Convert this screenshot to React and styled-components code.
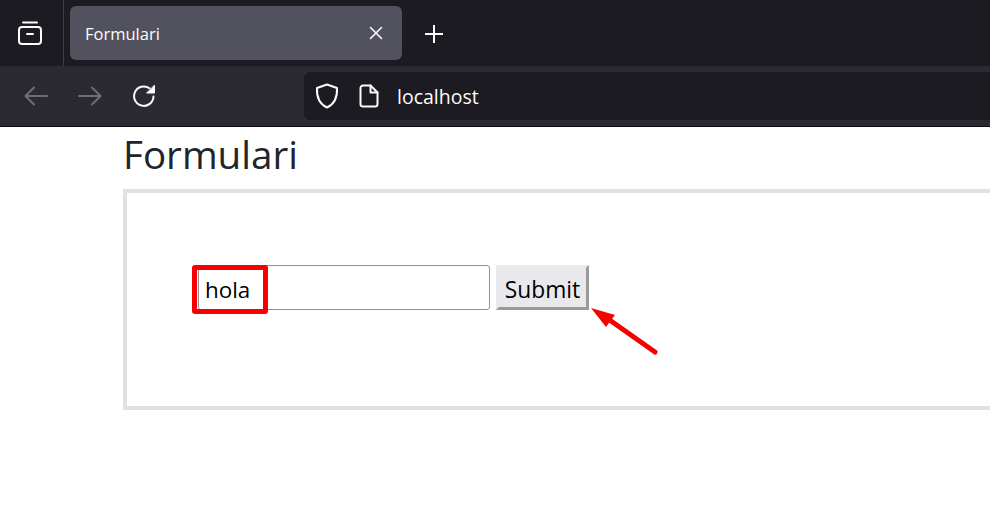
import styled, { createGlobalStyle } from "styled-components";

const GlobalStyle = createGlobalStyle`
  html, body {
    margin: 0;
    padding: 0;
    height: 100%;
    overflow: hidden;
    background: #fff;
  }
  #root {
    height: 100%;
  }
`;

const Window = styled.div`
  display: flex;
  flex-direction: column;
  width: 990px;
  height: 519px;
  overflow: hidden;
  font-family: "Open Sans", "Noto Sans", sans-serif;
`;

const TabBar = styled.div`
  display: flex;
  align-items: stretch;
  height: 66px;
  background: #1c1b22;
`;

const SideButton = styled.div`
  display: flex;
  align-items: center;
  box-sizing: border-box;
  width: 64px;
  padding-left: 17px;
  border-right: 1px solid #3f3e46;
`;

const Tab = styled.div`
  display: flex;
  align-items: center;
  justify-content: space-between;
  box-sizing: border-box;
  width: 332px;
  height: 54px;
  margin: 6px 0 0 6px;
  padding: 0 19px 0 15px;
  border-radius: 6px;
  background: #52525e;
  color: #fbfbfe;
  font-size: 16.5px;
`;

const NewTab = styled.div`
  display: flex;
  align-items: center;
  justify-content: center;
  width: 64px;
  padding-top: 2px;
`;

const Toolbar = styled.div`
  display: flex;
  align-items: center;
  box-sizing: border-box;
  height: 61px;
  padding: 0 0 1px 23px;
  background: #2b2a33;
  border-bottom: 1px solid #0c0c0f;
`;

const NavButton = styled.div`
  display: flex;
  width: 26px;
  margin-left: ${(p) => p.$shift || 0}px;
  margin-right: ${(p) => 28 - (p.$shift || 0)}px;
`;

const UrlBar = styled.div`
  display: flex;
  align-items: center;
  flex: 1;
  height: 48px;
  margin-left: 119px;
  margin-right: -20px;
  padding-left: 11px;
  border-radius: 6px;
  background: #1c1b22;
  color: #fbfbfe;
  font-size: 19.5px;
`;

const UrlIcon = styled.div`
  display: flex;
  margin-right: ${(p) => p.$gap}px;
`;

const UrlText = styled.span`
  padding-top: 2px;
`;

const Page = styled.main`
  flex: 1;
  padding-left: 123px;
  color: #212529;
`;

const Title = styled.h1`
  height: 55px;
  margin: 0 0 7px 0;
  font-size: 38.6px;
  font-weight: 400;
  line-height: 55px;
`;

const FormBox = styled.form`
  display: flex;
  align-items: flex-start;
  gap: 6px;
  box-sizing: border-box;
  width: 900px;
  height: 221px;
  padding: 72px 0 0 71px;
  border: 4px solid #dee2e0;
`;

const FieldWrap = styled.div`
  position: relative;
`;

const TextField = styled.input`
  display: block;
  box-sizing: border-box;
  width: 292px;
  height: 45px;
  padding: 4px 6px 0;
  border: 1px solid #8f8f9d;
  border-radius: 3px;
  background: #fff;
  color: #000;
  font-family: inherit;
  font-size: 22.4px;
  outline: none;
`;

const Highlight = styled.div`
  position: absolute;
  left: -6px;
  top: 0;
  box-sizing: border-box;
  width: 76px;
  height: 49px;
  border: 5px solid #f80000;
  border-radius: 3px;
`;

const SubmitButton = styled.button`
  box-sizing: border-box;
  width: 93px;
  height: 45px;
  padding: 4px 0 0;
  border: 3px solid;
  border-color: #e9e9ed #9a9a9a #9a9a9a #e9e9ed;
  background: #e9e9ed;
  color: #000;
  font-family: inherit;
  font-size: 22.8px;
`;

const Arrow = styled.svg`
  position: absolute;
  left: 93px;
  top: 40px;
`;

const icon = { fill: "none", stroke: "#fbfbfe", strokeWidth: 2, strokeLinecap: "round", strokeLinejoin: "round" };

export default function App() {
  return (
    <Window>
      <GlobalStyle />
      <TabBar>
        <SideButton>
          <svg width="26" height="26" viewBox="0 0 26 26" {...icon}>
            <rect x="2" y="7" width="22" height="17" rx="3" />
            <path d="M6 2.500h14" />
            <path d="M10 14h6" />
          </svg>
        </SideButton>
        <Tab>
          Formulari
          <svg width="14" height="14" viewBox="0 0 14 14" {...icon} strokeWidth="1.6">
            <path d="M1.500 1.500l11 11M12.500 1.500l-11 11" />
          </svg>
        </Tab>
        <NewTab>
          <svg width="18" height="18" viewBox="0 0 18 18" {...icon}>
            <path d="M9 0.500v17M0.500 9h17" />
          </svg>
        </NewTab>
      </TabBar>
      <Toolbar>
        <NavButton>
          <svg width="26" height="22" viewBox="0 0 26 22" {...icon} stroke="#6f6e75">
            <path d="M24 11H3M11 2.500L2.500 11l8.500 8.500" />
          </svg>
        </NavButton>
        <NavButton>
          <svg width="26" height="22" viewBox="0 0 26 22" {...icon} stroke="#6f6e75">
            <path d="M2 11h21M15 2.500l8.500 8.500-8.500 8.500" />
          </svg>
        </NavButton>
        <NavButton $shift={1}>
          <svg width="24" height="24" viewBox="0 0 24 24" {...icon}>
            <path d="M21.500 12.500a9.700 9.700 0 1 1-4-8.200" />
            <path d="M22.500 1.500v7.500h-7.500z" fill="#fbfbfe" strokeWidth="1" />
          </svg>
        </NavButton>
        <UrlBar>
          <UrlIcon $gap={20}>
            <svg width="24" height="26" viewBox="0 0 24 26" {...icon}>
              <path d="M12 1.500l10 3.500c.5 9-2.500 16-10 19.500C4.500 21 1.500 14 2 5z" />
            </svg>
          </UrlIcon>
          <UrlIcon $gap={18}>
            <svg width="20" height="24" viewBox="0 0 20 24" {...icon}>
              <path d="M4 1.500h7.500l7 7V20a2.500 2.500 0 0 1-2.500 2.500H4A2.500 2.500 0 0 1 1.500 20V4A2.500 2.500 0 0 1 4 1.500z" />
              <path d="M11.500 1.500V8.500h7" />
            </svg>
          </UrlIcon>
          <UrlText>localhost</UrlText>
        </UrlBar>
      </Toolbar>
      <Page>
        <Title>Formulari</Title>
        <FormBox onSubmit={(e) => e.preventDefault()}>
          <FieldWrap>
            <TextField defaultValue="hola" />
            <Highlight />
          </FieldWrap>
          <FieldWrap>
            <SubmitButton type="button">Submit</SubmitButton>
            <Arrow width="72" height="52" viewBox="0 0 72 52">
              <path d="M22 16L66 47" fill="none" stroke="#f80000" strokeWidth="5" strokeLinecap="round" />
              <path d="M2 3l24 7-9 12z" fill="#f80000" />
            </Arrow>
          </FieldWrap>
        </FormBox>
      </Page>
    </Window>
  );
}
